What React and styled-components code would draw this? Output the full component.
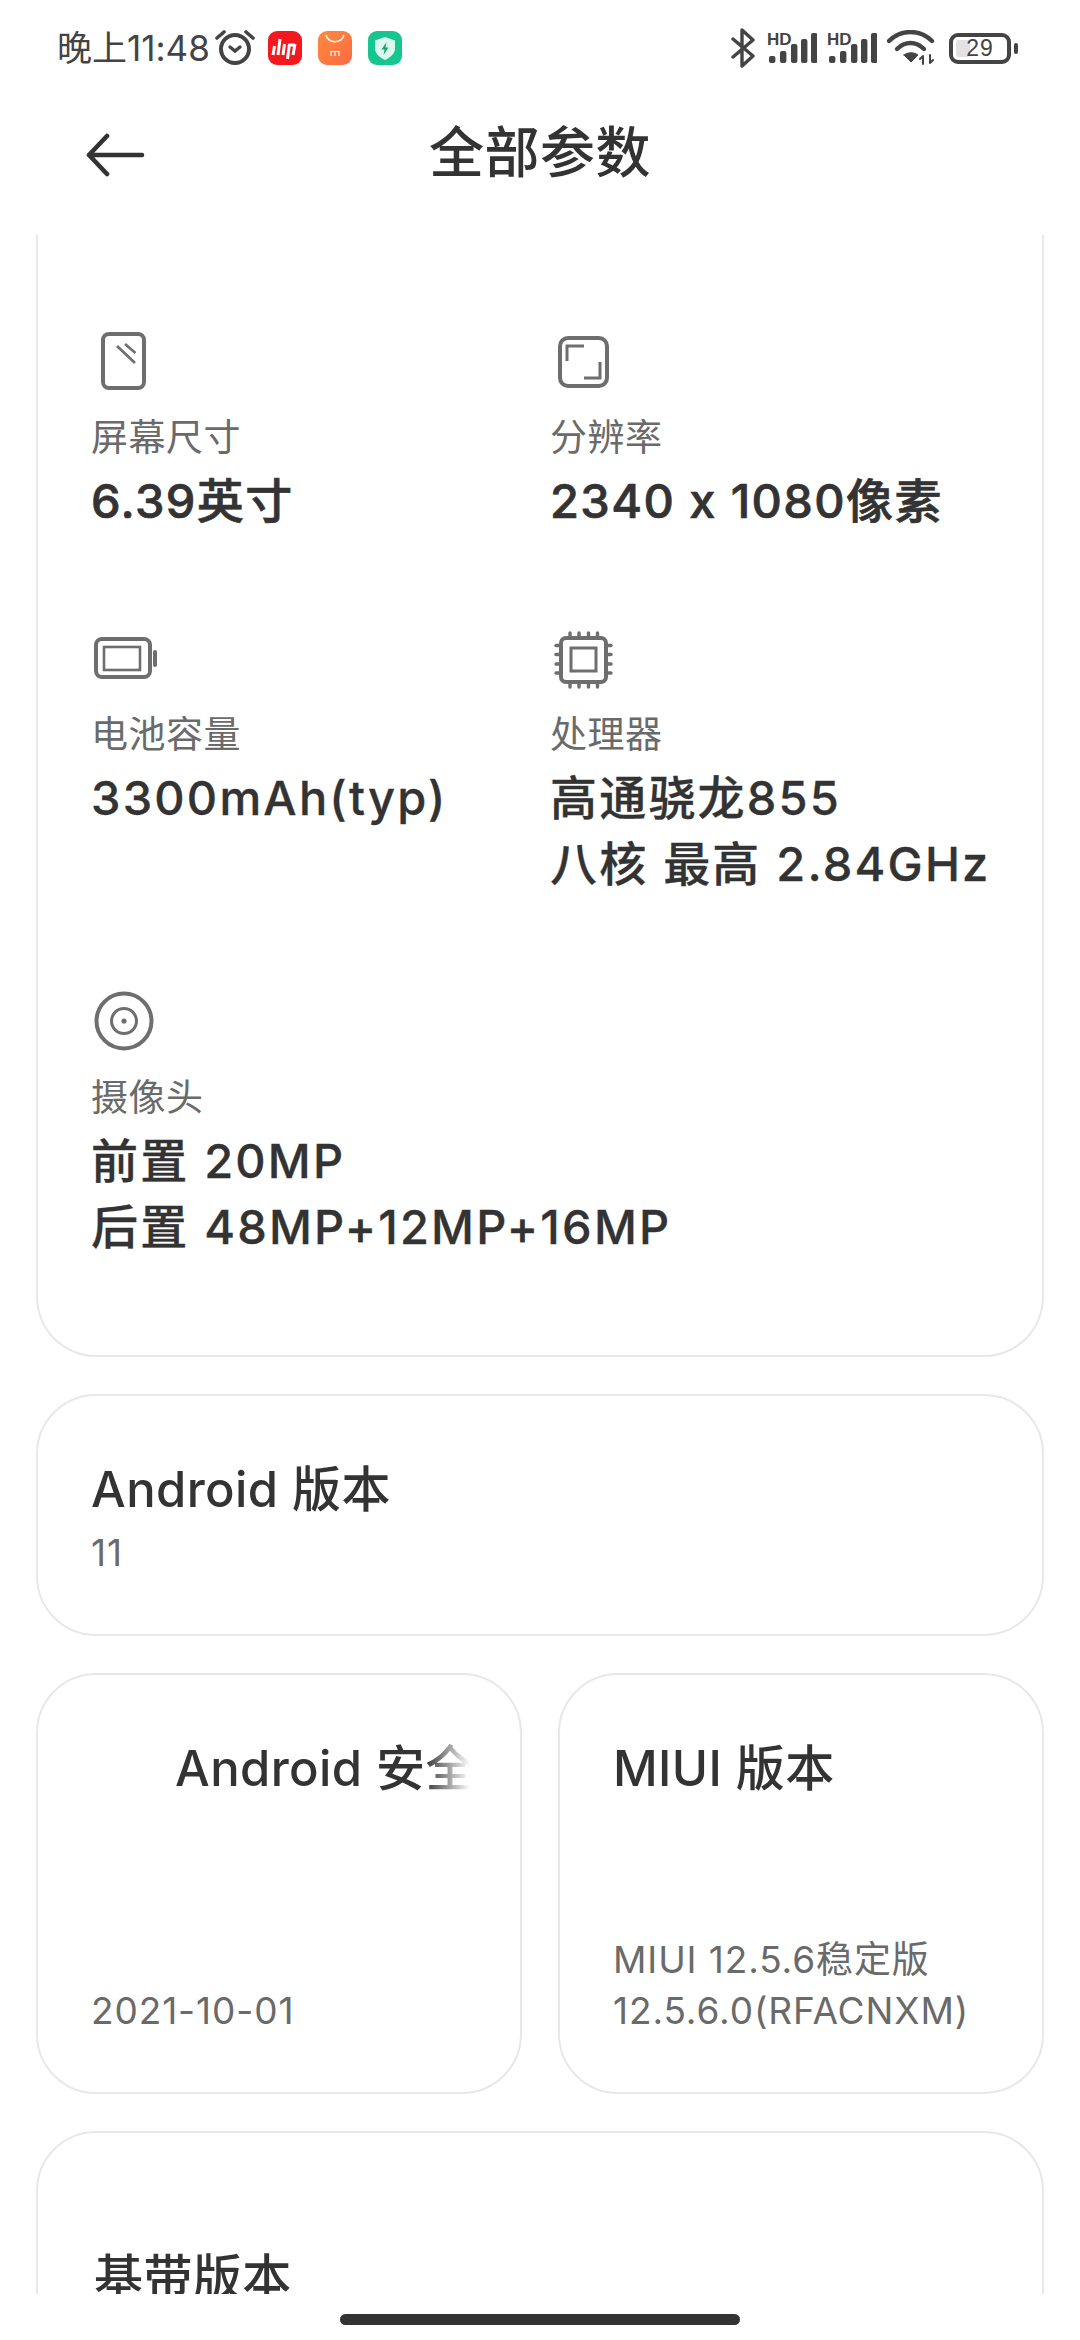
import styled, { createGlobalStyle } from "styled-components";

const GlobalStyle = createGlobalStyle`
    * {
        box-sizing: border-box;
    }
    body {
        margin: 0;
        background: #fff;
        font-family: "Inter", "Noto Sans CJK SC", sans-serif;
        font-variant-ligatures: none;
        font-feature-settings: "calt" 0;
    }
`;

const specs = [
    { id: "screen", icon: <ScreenIcon />, label: "屏幕尺寸", value: ["6.39英寸"], heavy: true },
    { id: "res", icon: <ResolutionIcon />, label: "分辨率", value: ["2340 x 1080像素"], heavy: true },
    { id: "battery", icon: <BatteryIcon />, label: "电池容量", value: ["3300mAh(typ)"] },
    { id: "cpu", icon: <ChipIcon />, label: "处理器", value: ["高通骁龙855", "八核 最高 2.84GHz"] },
    { id: "camera", icon: <CameraIcon />, label: "摄像头", value: ["前置 20MP", "后置 48MP+12MP+16MP"], wide: true },
];

function ScreenIcon() {
    return (
        <SpecSvg viewBox="0 0 68 68">
            <rect x="12" y="7" width="41" height="54" rx="6" strokeWidth="4" />
            <path d="M26 19 L44 36 M34 17 L44.5 26" strokeWidth="2.6" />
        </SpecSvg>
    );
}

function ResolutionIcon() {
    return (
        <SpecSvg viewBox="0 0 68 68">
            <rect x="10" y="11" width="47" height="48" rx="8" strokeWidth="4" />
            <path d="M17 34 V19 H34 M34 51 H50 V35" strokeWidth="3" />
        </SpecSvg>
    );
}

function BatteryIcon() {
    return (
        <SpecSvg viewBox="0 0 68 68">
            <rect x="5" y="15" width="54" height="38" rx="6" strokeWidth="4" />
            <rect x="13" y="23" width="36" height="23" strokeWidth="2.6" />
            <path d="M64 28 V41" strokeWidth="4" strokeLinecap="round" />
        </SpecSvg>
    );
}

function ChipIcon() {
    const pins = [0, 9, 18.5, 27.5];
    return (
        <SpecSvg viewBox="0 0 68 68">
            <rect x="11" y="14" width="45" height="44" rx="5" strokeWidth="4" />
            <rect x="21" y="24" width="25" height="23" strokeWidth="3" />
            {pins.map((p) => (
                <g key={p} strokeWidth="3.4" strokeLinecap="round">
                    <path d={`M${20 + p} 9 V12`} />
                    <path d={`M${20 + p} 60 V63`} />
                    <path d={`M6 ${21.5 + p} H9`} />
                    <path d={`M58 ${21.5 + p} H61`} />
                </g>
            ))}
        </SpecSvg>
    );
}

function CameraIcon() {
    return (
        <SpecSvg viewBox="0 0 68 68">
            <circle cx="33" cy="34" r="27.5" strokeWidth="4" />
            <circle cx="33" cy="34" r="12.5" strokeWidth="3" />
            <circle cx="33" cy="34" r="2.6" fill="#6e6e6e" stroke="none" />
        </SpecSvg>
    );
}

function SignalIcon() {
    const bars = [
        { x: 2, top: 25 },
        { x: 13, top: 20 },
        { x: 24, top: 13 },
        { x: 34, top: 8 },
        { x: 44, top: 2 },
    ];
    return (
        <svg width="50" height="34" viewBox="0 0 50 34">
            <SignalLabel x="0" y="14">HD</SignalLabel>
            {bars.map((bar) => (
                <rect key={bar.x} x={bar.x} y={bar.top} width="6.4" height={32 - bar.top} rx="2" fill="#444" />
            ))}
        </svg>
    );
}

function App() {
    return (
        <Page>
            <GlobalStyle />
            <StatusBar>
                <StatusLeft>
                    <Time>晚上11:48</Time>
                    <svg width="40" height="38" viewBox="0 0 40 38" fill="none" stroke="#444" strokeLinecap="round">
                        <circle cx="20" cy="20" r="14" strokeWidth="4" />
                        <path d="M2 9 L9 3 M38 9 L31 3" strokeWidth="3.6" />
                        <path d="M15 18 L20 22 L25 18" strokeWidth="3.4" />
                    </svg>
                    <AppIcons>
                        <AppIcon $bg="#f5191f">
                            <svg width="34" height="34" viewBox="0 0 34 34" fill="none" stroke="#fff" strokeWidth="3">
                                <path d="M5 24 L6.5 15 M10 24 L12 8 M15 24 L16.5 13 M19.5 28 L21.5 13 M25 24 L27 13 M21 14 L27 14" />
                            </svg>
                        </AppIcon>
                        <AppIcon $bg="linear-gradient(135deg, #ff8a3c, #fd6a45)">
                            <svg width="34" height="34" viewBox="0 0 34 34" fill="none" stroke="#fff">
                                <path d="M8 4 C10 13 24 13 26 4" strokeWidth="1.6" />
                                <path d="M13 25 V20.5 H21 V25 M17 21 V25" strokeWidth="1.2" />
                            </svg>
                        </AppIcon>
                        <AppIcon $bg="#16c690">
                            <svg width="34" height="34" viewBox="0 0 34 34">
                                <path d="M17 6 L27 9.5 V18 C27 23 21 27 17 29 C13 27 7 23 7 18 V9.5 Z" fill="#dcf7ee" />
                                <path d="M18.5 11 L13.5 18.5 H16.5 L15.5 24 L20.5 16.5 H17.5 Z" fill="#17a67a" />
                            </svg>
                        </AppIcon>
                    </AppIcons>
                </StatusLeft>
                <StatusRight>
                    <BluetoothWrap>
                        <svg width="24" height="40" viewBox="0 0 24 40" fill="none" stroke="#444" strokeWidth="3.4" strokeLinecap="round" strokeLinejoin="round">
                            <path d="M2 11 L22 28 L11 38 V2 L22 12 L2 29" />
                        </svg>
                    </BluetoothWrap>
                    <SignalIcon />
                    <SignalIcon />
                    <svg width="48" height="36" viewBox="0 0 48 36" fill="none" stroke="#444" strokeLinecap="round">
                        <path d="M2 11 C14 -1 33 -1 45 11" strokeWidth="4.4" />
                        <path d="M10 19 C18 11 29 11 37 19" strokeWidth="4.4" />
                        <path d="M17 25 L24 32 L31 25 C27 22 21 22 17 25 Z" fill="#444" strokeWidth="1" />
                        <path d="M36 26 V34 M33 29 L36 26 M43 25 V33 M43 33 L46 30" strokeWidth="2" />
                    </svg>
                    <Battery>
                        <BatteryFill />
                        <BatteryText>29</BatteryText>
                        <BatteryNub />
                    </Battery>
                </StatusRight>
            </StatusBar>
            <Header>
                <BackButton>
                    <svg width="60" height="44" viewBox="0 0 60 44" fill="none" stroke="#333" strokeWidth="4.6" strokeLinecap="round" strokeLinejoin="round">
                        <path d="M3 22 H56 M21 3 L3 22 L21 41" />
                    </svg>
                </BackButton>
                <Title>全部参数</Title>
            </Header>
            <Scroll>
                <SpecCard>
                    {specs.map((spec) => (
                        <SpecItem key={spec.id} $wide={spec.wide}>
                            <IconBox>{spec.icon}</IconBox>
                            <SpecLabel>{spec.label}</SpecLabel>
                            {spec.value.map((line) => (
                                <SpecValue key={line} $heavy={spec.heavy}>{line}</SpecValue>
                            ))}
                        </SpecItem>
                    ))}
                </SpecCard>
                <WideCard>
                    <CardTitle>Android 版本</CardTitle>
                    <CardText>11</CardText>
                </WideCard>
                <CardRow>
                    <TallCard>
                        <Marquee>
                            <MarqueeText>Android 安全</MarqueeText>
                        </Marquee>
                        <div>
                            <CardText>2021-10-01</CardText>
                        </div>
                    </TallCard>
                    <TallCard>
                        <CardTitle>MIUI 版本</CardTitle>
                        <div>
                            <CardText>MIUI 12.5.6稳定版</CardText>
                            <CardText>12.5.6.0(RFACNXM)</CardText>
                        </div>
                    </TallCard>
                </CardRow>
                <LastCard>
                    <CardTitle>基带版本</CardTitle>
                </LastCard>
            </Scroll>
            <NavBar>
                <HomeBar />
            </NavBar>
        </Page>
    );
}

export default App;

const Page = styled.div`
    width: 1080px;
    height: 2340px;
    display: flex;
    flex-direction: column;
    overflow: hidden;
    background: #fff;
`;

const StatusBar = styled.div`
    height: 96px;
    padding: 0 63px 0 57px;
    display: flex;
    align-items: center;
    justify-content: space-between;
    flex-shrink: 0;
`;

const StatusLeft = styled.div`
    display: flex;
    align-items: center;
    gap: 5px;
`;

const Time = styled.span`
    font-size: 35px;
    line-height: 40px;
    color: #444;
`;

const AppIcons = styled.div`
    display: flex;
    gap: 16px;
    margin-left: 8px;
`;

const AppIcon = styled.div`
    width: 34px;
    height: 34px;
    border-radius: 9px;
    background: ${({ $bg }) => $bg};
    overflow: hidden;
`;

const StatusRight = styled.div`
    display: flex;
    align-items: center;
    gap: 10px;
`;

const BluetoothWrap = styled.div`
    line-height: 0;
    margin-right: 2px;
`;

const SignalLabel = styled.text`
    font-family: "Liberation Sans", sans-serif;
    font-size: 17px;
    font-weight: 700;
    fill: #444;
`;

const Battery = styled.div`
    position: relative;
    width: 62px;
    height: 31px;
    margin: 0 6px 0 4px;
    border: 4px solid #444;
    border-radius: 9px;
    display: flex;
    align-items: center;
    justify-content: center;
`;

const BatteryFill = styled.div`
    position: absolute;
    left: 3px;
    top: 3px;
    bottom: 3px;
    width: 14px;
    background: #e2e2e2;
    border-radius: 2px;
`;

const BatteryText = styled.span`
    position: relative;
    font-family: "Liberation Sans", sans-serif;
    font-size: 23px;
    line-height: 23px;
    letter-spacing: 1px;
    color: #444;
`;

const BatteryNub = styled.div`
    position: absolute;
    right: -11px;
    top: 6px;
    width: 4px;
    height: 11px;
    border-radius: 2px;
    background: #444;
`;

const Header = styled.div`
    position: relative;
    height: 139px;
    padding-bottom: 27px;
    display: flex;
    align-items: center;
    justify-content: center;
    flex-shrink: 0;
`;

const BackButton = styled.div`
    position: absolute;
    left: 86px;
    top: 37px;
    line-height: 0;
`;

const Title = styled.div`
    font-size: 55px;
    line-height: 70px;
    letter-spacing: 0.5px;
    font-weight: 500;
    color: #333;
`;

const Scroll = styled.div`
    flex: 1;
    min-height: 0;
    overflow: hidden;
    padding: 0 36px;
    display: flex;
    flex-direction: column;
    gap: 37px;
`;

const Card = styled.div`
    border: 2px solid #e8e8e8;
    border-radius: 60px;
    flex-shrink: 0;
`;

const SpecCard = styled(Card)`
    border-top: 0;
    border-top-left-radius: 0;
    border-top-right-radius: 0;
    padding: 92px 30px 95px 53px;
    display: grid;
    grid-template-columns: 459px minmax(0, 1fr);
    row-gap: 90px;
`;

const SpecItem = styled.div`
    grid-column: ${({ $wide }) => ($wide ? "1 / -1" : "auto")};
`;

const IconBox = styled.div`
    width: 68px;
    height: 68px;
    margin-bottom: 18px;
`;

const SpecSvg = styled.svg`
    display: block;
    width: 68px;
    height: 68px;
    fill: none;
    stroke: #6e6e6e;
`;

const SpecLabel = styled.div`
    font-size: 37px;
    line-height: 50px;
    letter-spacing: 0.5px;
    color: #6a6a6a;
    margin-bottom: 5px;
`;

const SpecValue = styled.div`
    font-size: 47px;
    line-height: 66px;
    letter-spacing: ${({ $heavy }) => ($heavy ? "1.4px" : "2.2px")};
    font-weight: 500;
    color: #333;
    white-space: nowrap;
    -webkit-text-stroke: ${({ $heavy }) => ($heavy ? "0.7px" : "0.3px")} #333;
`;

const WideCard = styled(Card)`
    height: 242px;
    padding: 61px 53px 0;
`;

const CardTitle = styled.div`
    font-size: 49px;
    line-height: 66px;
    letter-spacing: 0.4px;
    font-weight: 500;
    color: #333;
    white-space: nowrap;
`;

const CardText = styled.div`
    font-size: 37px;
    line-height: 51px;
    letter-spacing: 0.9px;
    color: #6a6a6a;
    white-space: nowrap;
    ${WideCard} & {
        margin-top: 4px;
    }
`;

const CardRow = styled.div`
    display: grid;
    grid-template-columns: repeat(2, minmax(0, 1fr));
    gap: 36px;
    flex-shrink: 0;
`;

const TallCard = styled(Card)`
    height: 421px;
    padding: 61px 50px 56px 53px;
    display: flex;
    flex-direction: column;
    justify-content: space-between;
`;

const Marquee = styled.div`
    overflow: hidden;
    mask-image: linear-gradient(to right, #000 88%, transparent);
`;

const MarqueeText = styled(CardTitle)`
    padding-left: 84px;
`;

const LastCard = styled(Card)`
    height: 400px;
    padding: 112px 56px 0;
`;

const NavBar = styled.div`
    height: 46px;
    padding-top: 20px;
    display: flex;
    justify-content: center;
    flex-shrink: 0;
`;

const HomeBar = styled.div`
    width: 400px;
    height: 11px;
    border-radius: 6px;
    background: #333;
`;
